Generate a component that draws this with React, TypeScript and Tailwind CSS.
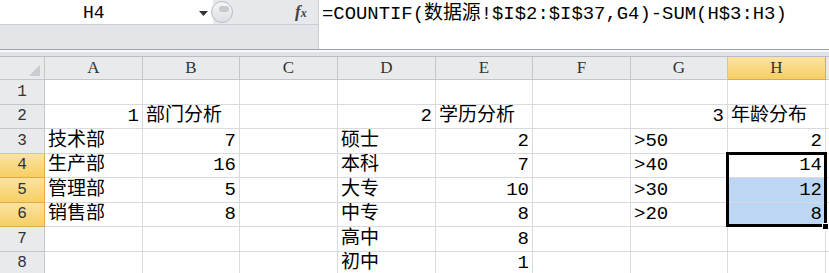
import React from 'react'

const FONT = '"Liberation Mono", "Noto Sans CJK SC", monospace'

const colWidths = [45, 98, 97, 98, 98, 97, 98, 97, 98, 30]
const colLetters = ['A', 'B', 'C', 'D', 'E', 'F', 'G', 'H', '']

type Cell = { v: string; right?: boolean }

// rows 1..8, columns A..I
const sheet: (Cell | null)[][] = [
  [null, null, null, null, null, null, null, null, null],
  [{ v: '1', right: true }, { v: '部门分析' }, null, { v: '2', right: true }, { v: '学历分析' }, null, { v: '3', right: true }, { v: '年龄分布' }, null],
  [{ v: '技术部' }, { v: '7', right: true }, null, { v: '硕士' }, { v: '2', right: true }, null, { v: '>50' }, { v: '2', right: true }, null],
  [{ v: '生产部' }, { v: '16', right: true }, null, { v: '本科' }, { v: '7', right: true }, null, { v: '>40' }, { v: '14', right: true }, null],
  [{ v: '管理部' }, { v: '5', right: true }, null, { v: '大专' }, { v: '10', right: true }, null, { v: '>30' }, { v: '12', right: true }, null],
  [{ v: '销售部' }, { v: '8', right: true }, null, { v: '中专' }, { v: '8', right: true }, null, { v: '>20' }, { v: '8', right: true }, null],
  [null, null, null, { v: '高中' }, { v: '8', right: true }, null, null, null, null],
  [null, null, null, { v: '初中' }, { v: '1', right: true }, null, null, null, null]
]

const selectedRows = [4, 5, 6]

function FormulaBar() {
  return (
    <div className="h-[50px] flex border-b border-[#9aa3ad] bg-[#e6e8eb]">
      <div className="w-[318px] flex flex-col shrink-0">
        <div className="h-[25px] flex items-center">
          <div className="w-[213px] h-full bg-white border-b border-[#c9ced4] flex items-center relative">
            <span className="absolute left-[83px] top-[2px] text-[18px] leading-[22px] text-black" style={{ fontFamily: FONT }}>H4</span>
            <svg className="absolute left-[199px] top-[11px]" width="9" height="5" viewBox="0 0 9 5">
              <path d="M0 0 L9 0 L4.5 5 Z" fill="#333" />
            </svg>
          </div>
          <div className="relative w-[105px] h-full bg-[#e6e8eb] border-b border-[#c9ced4]">
            <div className="absolute left-[-2px] top-[1px] w-[22px] h-[22px] rounded-full border border-[#b9bec4] bg-gradient-to-b from-[#f4f5f6] to-[#dcdfe2]" />
            <div className="absolute left-[6px] top-[6px] w-[10px] h-[6px] rounded-full bg-[#c6cacf]" />
            <span className="absolute left-[82px] top-[1px] text-[17px] italic font-bold text-[#444] leading-[22px]" style={{ fontFamily: '"Liberation Serif", serif' }}>
              f<span className="text-[12px]">x</span>
            </span>
          </div>
        </div>
        <div className="flex-1 bg-[#e3e5e8]" />
      </div>
      <div className="flex-1 bg-white border-l border-[#c9ced4] pl-[3px] pt-[3px]">
        <span className="text-[18.9px] leading-[20px] text-black whitespace-nowrap" style={{ fontFamily: FONT }}>
          =COUNTIF(数据源!$I$2:$I$37,G4)-SUM(H$3:H3)
        </span>
      </div>
    </div>
  )
}

export default function App() {
  const gridCols = colWidths.map((w) => `${w}px`).join(' ')
  const headLetter = '"Liberation Serif", serif'
  return (
    <div className="w-[829px] h-[273px] overflow-hidden bg-white relative" style={{ fontFamily: FONT }}>
      <FormulaBar />
      <div className="h-[7px] bg-[#dfe2e6] border-t-2 border-[#f7f8f9] border-b border-b-[#b8bdc3]" />
      <div className="grid" style={{ gridTemplateColumns: gridCols, gridTemplateRows: '23px repeat(8, 24.5px)' }}>
        {/* header row */}
        <div className="bg-[#e9eaec] border-r border-b border-[#c3c7cc] relative">
          <svg className="absolute right-[4px] bottom-[3px]" width="11" height="11" viewBox="0 0 11 11">
            <path d="M11 0 L11 11 L0 11 Z" fill="#c8cbcf" />
          </svg>
        </div>
        {colLetters.map((c, i) => (
          <div
            key={i}
            style={{ fontFamily: headLetter }}
            className={
              c === 'H'
                ? 'bg-gradient-to-b from-[#fbe3a0] to-[#f6cf62] border-r border-b border-[#e1a94b] flex items-center justify-center text-[17px] text-[#333]'
                : 'bg-[#e9eaec] border-r border-b border-[#c3c7cc] flex items-center justify-center text-[17px] text-[#333]'
            }
          >
            {c}
          </div>
        ))}
        {sheet.map((row, ri) => {
          const r = ri + 1
          const sel = selectedRows.includes(r)
          return (
            <React.Fragment key={r}>
              <div
                className={
                  sel
                    ? 'bg-gradient-to-b from-[#fbe3a0] to-[#f6cf62] border-r border-b border-[#e1a94b] flex items-center justify-center text-[16px] text-[#333]'
                    : 'bg-[#e9eaec] border-r border-b border-[#c3c7cc] flex items-center justify-center text-[16px] text-[#333]'
                }
              >
                {r}
              </div>
              {row.map((cell, ci) => {
                const blue = ci === 7 && (r === 5 || r === 6)
                return (
                  <div
                    key={ci}
                    className={
                      (blue ? 'bg-[#bcd6f3] ' : 'bg-white ') +
                      'border-r border-b border-[#d8dadd] flex items-end overflow-hidden whitespace-nowrap text-[19px] leading-[21px] text-black pb-[1px] ' +
                      (cell?.right ? 'justify-end pr-[3px]' : 'justify-start pl-[3px]')
                    }
                  >
                    {cell?.v}
                  </div>
                )
              })}
            </React.Fragment>
          )
        })}
      </div>
      {/* selection outline H4:H6 */}
      <div className="absolute left-[726px] top-[152px] w-[101px] h-[75px] border-[3px] border-black pointer-events-none" />
      <div className="absolute left-[822px] top-[223px] w-[7px] h-[7px] bg-black border border-white pointer-events-none" />
    </div>
  )
}
